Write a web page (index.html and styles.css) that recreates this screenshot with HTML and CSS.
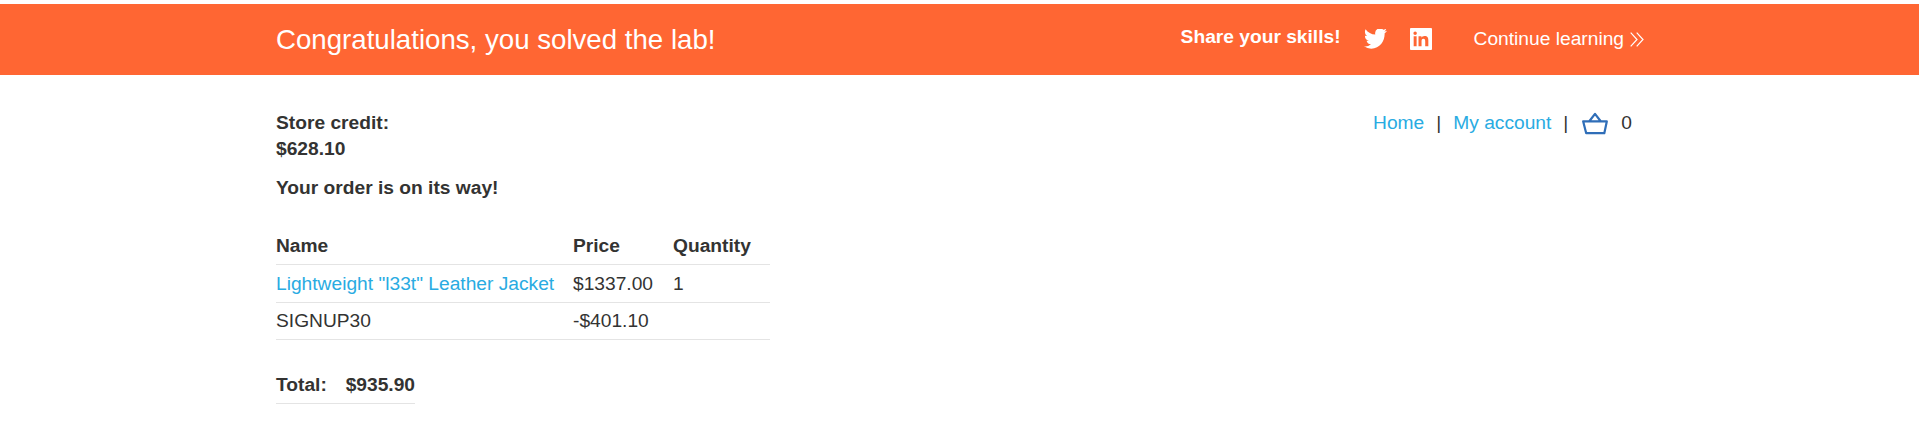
FILE: index.html
```html
<!DOCTYPE html>
<html lang="en">
<head>
<meta charset="utf-8">
<title>Order confirmation</title>
<link rel="stylesheet" href="styles.css">
</head>
<body>
<header class="banner">
  <div class="container banner-inner">
    <h4 class="banner-title">Congratulations, you solved the lab!</h4>
    <div class="banner-side">
      <span class="share">Share your skills!</span>
      <svg class="twitter" viewBox="0 3 24 20" preserveAspectRatio="none"><path d="M23.953 4.57a10 10 0 01-2.825.775 4.958 4.958 0 002.163-2.723c-.951.555-2.005.959-3.127 1.184a4.92 4.92 0 00-8.384 4.482C7.69 8.095 4.067 6.13 1.64 3.162a4.822 4.822 0 00-.666 2.475c0 1.71.87 3.213 2.188 4.096a4.904 4.904 0 01-2.228-.616v.06a4.923 4.923 0 003.946 4.827 4.996 4.996 0 01-2.212.085 4.936 4.936 0 004.604 3.417 9.867 9.867 0 01-6.102 2.105c-.39 0-.779-.023-1.17-.067a13.995 13.995 0 007.557 2.209c9.053 0 13.998-7.496 13.998-13.985 0-.21 0-.42-.015-.63A9.935 9.935 0 0024 4.59z"/></svg>
      <svg class="linkedin" viewBox="0 0 24 24"><path fill-rule="evenodd" d="M1 0H23a1 1 0 011 1V23a1 1 0 01-1 1H1a1 1 0 01-1-1V1a1 1 0 011-1zM4 9V19.8H7.2V9zM5.6 3.8a1.9 1.9 0 100 3.8 1.9 1.9 0 000-3.8zM9.3 9V19.8h3.3V14.6c0-1.5.3-2.8 2.1-2.8 1.8 0 1.9 1.6 1.9 2.9V19.8h3.4V14c0-3-.7-5.2-4.2-5.2-1.7 0-2.8.9-3.3 1.8V9z"/></svg>
      <a class="continue">Continue learning <svg class="chevrons" viewBox="0 0 14 15"><path d="M.7.7 7 7.5.7 14.3M6.7.7 13 7.5 6.7 14.3"/></svg></a>
    </div>
  </div>
</header>
<main class="container">
  <div class="top">
    <div class="credit"><p>Store credit:</p><p>$628.10</p></div>
    <nav class="nav">
      <a class="link">Home</a><span>|</span><a class="link">My account</a><span>|</span>
      <svg class="basket" viewBox="0 0 26 23"><path d="M1.2 9.4H24.8L22.3 21.2H4.2ZM7.5 9 13 1.8 18.5 9"/></svg>
      <span class="count">0</span>
    </nav>
  </div>
  <p class="message">Your order is on its way!</p>
  <table class="items">
    <tr class="head"><th class="name">Name</th><th class="price">Price</th><th>Quantity</th></tr>
    <tr class="first"><td><a class="link">Lightweight "l33t" Leather Jacket</a></td><td>$1337.00</td><td>1</td></tr>
    <tr><td>SIGNUP30</td><td>-$401.10</td><td></td></tr>
  </table>
  <div class="total"><span>Total:</span><span>$935.90</span></div>
</main>
</body>
</html>
```
FILE: styles.css
```css
* { box-sizing: border-box; }
body { margin: 0; background: #fff; color: #333332; font: 19.2px/26px Arial, "Liberation Sans", sans-serif; }
p, h4 { margin: 0; }
.container { width: 1368px; margin-left: 276px; }
.banner { margin-top: 4px; height: 71px; background: #ff6633; color: #fff; }
.banner-inner { height: 71px; display: flex; justify-content: space-between; }
.banner-title { font-size: 27.65px; font-weight: 400; line-height: 32px; padding-top: 20px; white-space: nowrap; }
.banner-side { display: flex; align-items: flex-start; white-space: nowrap; }
.share { font-weight: 700; padding-top: 20px; }
.twitter { width: 23px; height: 21px; margin: 25px 0 0 23px; fill: #fff; }
.linkedin { width: 22px; height: 22px; margin: 24px 0 0 23px; fill: #fff; }
.continue { padding-top: 22px; margin-left: 42px; display: flex; gap: 6px; }
.chevrons { width: 14px; height: 15px; margin-top: 6px; fill: none; stroke: #fff; stroke-width: 1.2; }
.top { display: flex; justify-content: space-between; padding-top: 35px; }
.credit { font-weight: 700; }
.nav { display: flex; padding-right: 12px; }
.nav span { margin: 0 12px; }
.nav .basket { width: 26px; height: 23px; margin: 2px 0 0 2px; fill: none; stroke: #2f6eb8; stroke-width: 2.2; stroke-linejoin: round; stroke-linecap: round; }
.nav .count { margin: 0 0 0 13px; }
.link { color: #29abe2; }
.message { font-weight: 700; margin-top: 13px; }
.items { width: 494px; margin-top: 27px; border-collapse: separate; border-spacing: 0; table-layout: fixed; }
.items th, .items td { height: 37px; padding: 5px 0; text-align: left; border-bottom: 1px solid #e4e4e4; white-space: nowrap; }
.items .first td { height: 38px; padding: 6px 0 5px; }
.items .name { width: 297px; }
.items .price { width: 100px; }
.total { width: 139px; margin-top: 32px; display: flex; justify-content: space-between; height: 32px; font-weight: 700; border-bottom: 1px solid #e4e4e4; }
```
